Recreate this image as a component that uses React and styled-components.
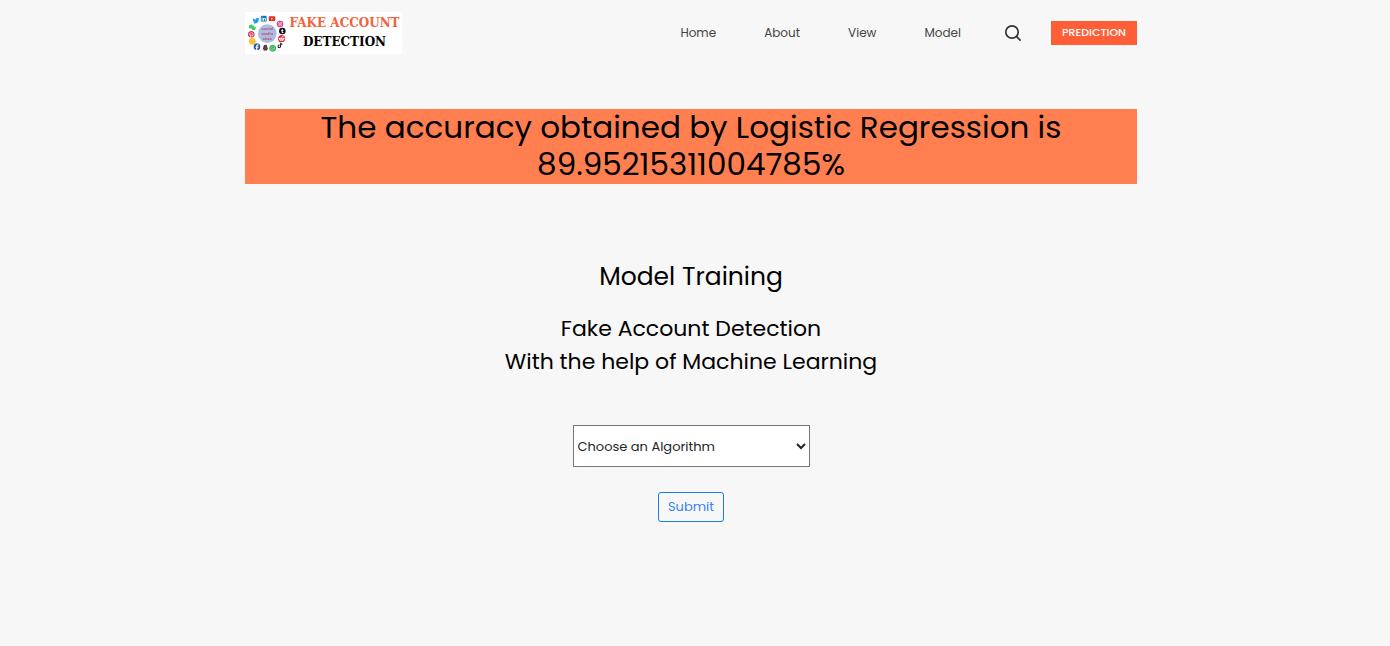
import React from "react";
import styled, { createGlobalStyle } from "styled-components";
import {
  FaTwitter, FaLinkedin, FaYoutube, FaInstagram, FaWeixin, FaPinterest,
  FaSnapchat, FaFacebook, FaQq, FaWhatsapp, FaTiktok, FaReddit, FaTumblr,
} from "react-icons/fa6";

const GlobalStyle = createGlobalStyle`
  *, *::before, *::after { box-sizing: border-box; }
  body {
    margin: 0;
    background: #f7f7f7;
    color: #000;
    font-family: Poppins, Inter, sans-serif;
    font-size: 13px;
  }
  h1, h2, p { margin: 0; font-weight: 400; }
`;

const Page = styled.div`
  padding: 12px 24px 24px 16px;
`;

const Container = styled.div`
  width: 100%;
  max-width: 892px;
  margin: 0 auto;
`;

const Header = styled.header`
  display: flex;
  justify-content: space-between;
  align-items: center;
  flex-wrap: wrap;
  gap: 16px;
`;

const Logo = styled.a`
  display: flex;
  align-items: center;
  width: 157px;
  height: 42px;
  background: #fff;
  text-decoration: none;
`;

const LogoArt = styled.svg`
  flex: none;
  width: 42px;
  height: 42px;
`;

const LogoWords = styled.span`
  display: flex;
  flex-direction: column;
  align-items: center;
  flex: 1;
  font: 700 12px/19px "DejaVu Serif", serif;
  white-space: nowrap;
`;

const LogoLine = styled.span`
  color: ${(p) => p.$color};
`;

const Nav = styled.nav`
  display: flex;
  align-items: center;
  flex-wrap: wrap;
`;

const NavLink = styled.a`
  margin-right: 48px;
  color: #444;
  font-size: 12px;
  line-height: 20px;
  text-decoration: none;
`;

const SearchButton = styled.button`
  display: flex;
  margin: 0 29px 0 -5px;
  padding: 0;
  border: 0;
  background: none;
  color: #333;
`;

const PredictionLink = styled.a`
  width: 86px;
  padding-bottom: 2px;
  background: #ff5e37;
  color: #fff;
  font-size: 11px;
  font-weight: 500;
  line-height: 22px;
  text-align: center;
  text-decoration: none;
`;

const Result = styled.h1`
  margin-top: 55px;
  padding-bottom: 1px;
  background: #ff7f50;
  font-size: 31px;
  line-height: 37px;
  text-align: center;
`;

const Training = styled.main`
  display: flex;
  flex-direction: column;
  align-items: center;
  padding-top: 78px;
  text-align: center;
`;

const Title = styled.h2`
  font-size: 25px;
  line-height: 30px;
`;

const Lead = styled.p`
  margin-top: 20px;
  font-size: 22px;
  line-height: 33px;
`;

const Form = styled.form`
  display: flex;
  flex-direction: column;
  align-items: center;
  gap: 25px;
  margin-top: 47px;
`;

const AlgorithmSelect = styled.select`
  width: 237px;
  height: 42px;
  border: 1px solid #767676;
  border-radius: 0;
  background: #fff;
  color: #212529;
  font: inherit;
`;

const SubmitButton = styled.button`
  width: 66px;
  height: 30px;
  padding: 0;
  border: 1px solid #1a7bef;
  border-radius: 3px;
  background: transparent;
  color: #3b82f6;
  font: inherit;
`;

const networks = [
  { Icon: FaTwitter, x: 33, y: 26, color: "#1d9bf0", size: 21 },
  { Icon: FaLinkedin, x: 56, y: 20, color: "#0a78b5", size: 20 },
  { Icon: FaYoutube, x: 81, y: 20, color: "#e52d27", size: 22 },
  { Icon: FaInstagram, x: 105, y: 36, color: "#fff", disc: "#d6408f", size: 14 },
  { Icon: FaTumblr, x: 112, y: 57, color: "#fff", disc: "#111", size: 12 },
  { Icon: FaReddit, x: 110, y: 80, color: "#e2243b", size: 22 },
  { Icon: FaTiktok, x: 105, y: 100, color: "#111", size: 17 },
  { Icon: FaWhatsapp, x: 83, y: 109, color: "#fff", disc: "#25b04b", size: 15 },
  { Icon: FaQq, x: 61, y: 107, color: "#6b3a35", size: 19 },
  { Icon: FaFacebook, x: 36, y: 104, color: "#2355a8", size: 21 },
  { Icon: FaSnapchat, x: 22, y: 88, color: "#fff", disc: "#f6b919", size: 14 },
  { Icon: FaPinterest, x: 19, y: 67, color: "#d8283c", size: 21 },
  { Icon: FaWeixin, x: 22, y: 46, color: "#34c759", size: 22 },
];

function LogoMark() {
  return (
    <LogoArt viewBox="0 0 126 126" aria-hidden="true">
      <circle cx="67" cy="65" r="28" fill="#a9bfe2" />
      <g fill="#c0567c" fontSize="11" fontWeight="700" textAnchor="middle">
        <text x="67" y="55">Social</text>
        <text x="67" y="69">Media</text>
        <text x="67" y="83">Sites</text>
      </g>
      {networks.map(({ Icon, x, y, color, disc, size }) => (
        <g key={`${x}-${y}`}>
          {disc && <circle cx={x} cy={y} r="10" fill={disc} />}
          <Icon x={x - size / 2} y={y - size / 2} size={size} color={color} />
        </g>
      ))}
    </LogoArt>
  );
}

export default function App() {
  return (
    <>
      <GlobalStyle />
      <Page>
        <Container>
          <Header>
            <Logo href="#">
              <LogoMark />
              <LogoWords>
                <LogoLine $color="#f4623a">FAKE ACCOUNT</LogoLine>
                <LogoLine $color="#000">DETECTION</LogoLine>
              </LogoWords>
            </Logo>
            <Nav>
              <NavLink href="#home">Home</NavLink>
              <NavLink href="#about">About</NavLink>
              <NavLink href="#view">View</NavLink>
              <NavLink href="#model">Model</NavLink>
              <SearchButton type="button" aria-label="Search">
                <svg width="18" height="18" viewBox="0 0 18 18" fill="none" stroke="currentColor" strokeWidth="1.7">
                  <circle cx="8" cy="8" r="6.2" />
                  <path d="M12.4 12.4 16.6 16.6" />
                </svg>
              </SearchButton>
              <PredictionLink href="#prediction">PREDICTION</PredictionLink>
            </Nav>
          </Header>
          <Result>The accuracy obtained by Logistic Regression is 89.95215311004785%</Result>
          <Training>
            <Title>Model Training</Title>
            <Lead>
              Fake Account Detection
              <br />
              With the help of Machine Learning
            </Lead>
            <Form onSubmit={(e) => e.preventDefault()}>
              <AlgorithmSelect aria-label="Algorithm" defaultValue="">
                <option value="">Choose an Algorithm</option>
                <option value="logistic">Logistic Regression</option>
              </AlgorithmSelect>
              <SubmitButton type="submit">Submit</SubmitButton>
            </Form>
          </Training>
        </Container>
      </Page>
    </>
  );
}
